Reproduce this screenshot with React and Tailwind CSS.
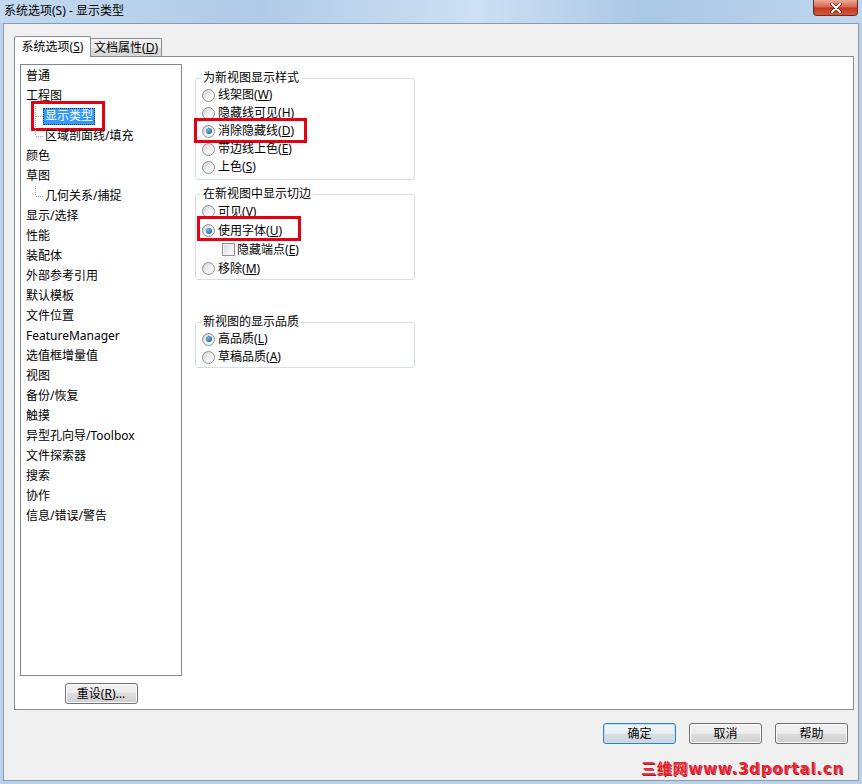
import React from 'react';

const tree = [
  { t: '普通' },
  { t: '工程图' },
  { t: '显示类型', child: true, sel: true },
  { t: '区域剖面线/填充', child: true, last: true },
  { t: '颜色' },
  { t: '草图' },
  { t: '几何关系/捕捉', child: true, last: true },
  { t: '显示/选择' },
  { t: '性能' },
  { t: '装配体' },
  { t: '外部参考引用' },
  { t: '默认模板' },
  { t: '文件位置' },
  { t: 'FeatureManager' },
  { t: '选值框增量值' },
  { t: '视图' },
  { t: '备份/恢复' },
  { t: '触摸' },
  { t: '异型孔向导/Toolbox' },
  { t: '文件探索器' },
  { t: '搜索' },
  { t: '协作' },
  { t: '信息/错误/警告' },
];

const Key = ({ text, k }) => (
  <span>
    {text}(<u>{k}</u>)
  </span>
);

const Radio = ({ checked }) => (
  <span className="w-[13px] h-[13px] shrink-0 rounded-full border border-[#8c8f94] bg-[linear-gradient(135deg,#cfd2d6,#f4f4f4_60%,#ffffff)] flex items-center justify-center">
    {checked && (
      <span className="w-[6px] h-[6px] rounded-full bg-[radial-gradient(circle_at_35%_35%,#6bb8ee,#154f8e)]" />
    )}
  </span>
);

const Check = () => (
  <span className="w-[13px] h-[13px] shrink-0 border border-[#8c8f94] bg-[linear-gradient(135deg,#d3d5d8,#f3f3f3_60%,#ffffff)] shadow-[inset_0_0_0_1px_#f4f4f4]" />
);

const Btn = ({ children, def }) => (
  <div
    className={`h-[21px] w-[73px] rounded-[3px] border flex items-center justify-center text-[12px] ${
      def
        ? 'border-[#3c7fb1] shadow-[inset_0_0_0_1px_#b7e2f8] bg-[linear-gradient(#f2f6f9,#e8eef2_50%,#d9e1e7_50%,#cdd6dd)]'
        : 'border-[#707070] shadow-[inset_0_0_0_1px_#fbfbfb] bg-[linear-gradient(#f2f2f2,#ebebeb_50%,#dddddd_50%,#cfcfcf)]'
    }`}
  >
    {children}
  </div>
);

const Connector = ({ last }) => (
  <svg width="8" height="20" className="shrink-0">
    <line x1="0.5" y1="0" x2="0.5" y2={last ? 10 : 20} stroke="#a0a0a0" strokeDasharray="1 1" />
    <line x1="1" y1="10.5" x2="8" y2="10.5" stroke="#a0a0a0" strokeDasharray="1 1" />
  </svg>
);

const RedBox = ({ className }) => (
  <div className={`absolute border-[3px] border-[#e50012] pointer-events-none ${className}`} />
);

const Group = ({ title, className, children }) => (
  <fieldset className={`border border-[#d5dfe5] rounded-[3px] ${className}`}>
    <legend className="ml-[5px] px-[2px] text-[12px] leading-[16px]">{title}</legend>
    {children}
  </fieldset>
);

const RadioRow = ({ checked, text, k, h = 'h-[18px]', box }) => (
  <div className={`relative flex items-center gap-[3px] pl-[6px] ${h}`}>
    <Radio checked={checked} />
    <Key text={text} k={k} />
    {box}
  </div>
);

export default function App() {
  return (
    <div className="w-[862px] h-[784px] bg-[#b9d1ea] flex flex-col overflow-hidden text-[12px] text-black [font-family:'Noto_Sans','Noto_Sans_CJK_SC',sans-serif]">
      {/* title bar */}
      <div className="h-[23px] shrink-0 flex items-start justify-between bg-[linear-gradient(90deg,#c3d9ef,#b0cbe8_30%,#cde0f4_55%,#aac7e6_75%,#c0d7ee)]">
        <div className="pl-[4px] pt-[3px] leading-[16px]">系统选项(S) - 显示类型</div>
        <div className="mr-[4px] w-[45px] h-[16px] rounded-b-[4px] border border-t-0 border-[#6b2a22] bg-[linear-gradient(#eaa99a,#d8664f_45%,#c6391e_55%,#d65a3e)] flex items-center justify-center">
          <svg width="12" height="10" viewBox="0 0 12 10">
            <path d="M2 1 L10 9 M10 1 L2 9" stroke="#5a2018" strokeWidth="3.6" strokeLinecap="round" />
            <path d="M2 1 L10 9 M10 1 L2 9" stroke="#ffffff" strokeWidth="2" strokeLinecap="round" />
          </svg>
        </div>
      </div>

      {/* dialog body */}
      <div className="flex-1 mx-[3px] mb-[3px] border border-[#8d9aaa] bg-[#f0f0f0] flex flex-col">
        {/* tabs */}
        <div className="flex items-end h-[20px] mt-[12px] ml-[10px]">
          <div className="relative z-10 -mb-px h-[21px] w-[77px] bg-white border border-b-0 border-[#898c95] rounded-t-[2px] flex items-center justify-center">
            <Key text="系统选项" k="S" />
          </div>
          <div className="h-[18px] w-[72px] -ml-px border border-b-0 border-[#898c95] rounded-t-[2px] bg-[linear-gradient(#f3f3f3,#ebebeb_50%,#dedede_50%,#d6d6d6)] flex items-center justify-center">
            <Key text="文档属性" k="D" />
          </div>
        </div>

        {/* tab page */}
        <div className="ml-[10px] mr-[4px] h-[654px] border border-[#898c95] bg-white flex items-start pl-[5px] pt-[7px]">
          {/* left tree */}
          <div className="w-[162px] flex flex-col">
            <div className="h-[612px] border border-[#828790] bg-white flex flex-col pt-[1px]">
              {tree.map((it, i) =>
                it.child ? (
                  <div key={i} className="relative h-[20px] flex items-center pl-[14px]">
                    <Connector last={it.last} />
                    <span
                      className={`h-[17px] flex items-center px-[1px] border ${
                        it.sel ? 'bg-[#3399ff] text-white border-dotted border-[#17324f]' : 'border-transparent'
                      }`}
                    >
                      {it.t}
                    </span>
                    {it.sel && <RedBox className="left-[10px] top-[-5px] w-[74px] h-[30px]" />}
                  </div>
                ) : (
                  <div key={i} className="h-[20px] flex items-center pl-[5px]">
                    {it.t}
                  </div>
                )
              )}
            </div>
            <div className="self-center mt-[7px]">
              <div className="h-[21px] w-[73px] rounded-[3px] border border-[#707070] shadow-[inset_0_0_0_1px_#fbfbfb] bg-[linear-gradient(#f2f2f2,#ebebeb_50%,#dddddd_50%,#cfcfcf)] flex items-center justify-center">
                <span>
                  重设(<u>R</u>)...
                </span>
              </div>
            </div>
          </div>

          {/* right options */}
          <div className="ml-[13px] w-[220px] flex flex-col">
            <Group title="为新视图显示样式" className="mt-[6px] pb-[3px]">
              <RadioRow text="线架图" k="W" />
              <RadioRow text="隐藏线可见" k="H" />
              <RadioRow
                checked
                text="消除隐藏线"
                k="D"
                box={<RedBox className="left-[-2px] top-[-4px] w-[113px] h-[25px]" />}
              />
              <RadioRow text="带边线上色" k="E" />
              <RadioRow text="上色" k="S" />
            </Group>

            <Group title="在新视图中显示切边" className="mt-[6px] pb-[1px]">
              <RadioRow text="可见" k="V" h="h-[19px]" />
              <RadioRow
                checked
                text="使用字体"
                k="U"
                h="h-[19px]"
                box={<RedBox className="left-[1px] top-[-5px] w-[104px] h-[25px]" />}
              />
              <div className="h-[19px] flex items-center gap-[2px] pl-[26px]">
                <Check />
                <Key text="隐藏端点" k="E" />
              </div>
              <RadioRow text="移除" k="M" h="h-[19px]" />
            </Group>

            <Group title="新视图的显示品质" className="mt-[34px] pb-[1px]">
              <RadioRow checked text="高品质" k="L" />
              <RadioRow text="草稿品质" k="A" />
            </Group>
          </div>
        </div>

        {/* buttons */}
        <div className="mt-[13px] flex justify-end gap-[13px] pr-[10px]">
          <Btn def>确定</Btn>
          <Btn>取消</Btn>
          <Btn>帮助</Btn>
        </div>

        {/* watermark */}
        <div className="mt-[15px] flex justify-end pr-[14px]">
          <span className="text-[15px] leading-[20px] font-bold text-[#e8202a] tracking-[0.8px] [font-family:'DejaVu_Sans','Noto_Sans_CJK_SC',sans-serif] [text-shadow:0_0_1px_#fff,1px_1px_0_#9a1016]">
            三维网www.3dportal.cn
          </span>
        </div>
      </div>
    </div>
  );
}
